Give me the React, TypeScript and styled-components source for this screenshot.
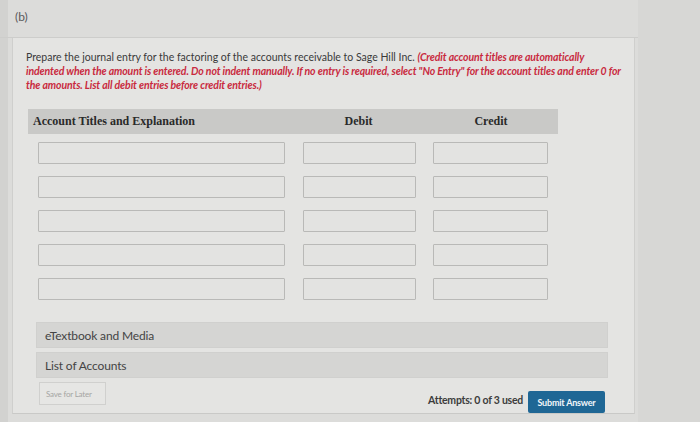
import React from "react";
import styled, { createGlobalStyle } from "styled-components";

const Global = createGlobalStyle`
  html, body { margin: 0; padding: 0; }
  body {
    background: #d6d6d4;
    font-family: Lato, "Open Sans", sans-serif;
    width: 700px;
    height: 422px;
    overflow: hidden;
  }
`;

const Page = styled.div`
  width: 700px;
  height: 422px;
  display: flex;
  flex-direction: column;
  background: linear-gradient(90deg, #d2d2d0 0px, #d2d2d0 8px, #dcdcda 8px, #dcdcda 638px, #d7d7d5 638px);
`;

const PartLabel = styled.div`
  height: 38px;
  box-sizing: border-box;
  padding: 9px 0 0 15px;
  font-size: 12px;
  color: #5a5a5a;
  border-bottom: 1px solid #cdcdcb;
  width: 638px;
`;

const Panel = styled.div`
  margin-left: 12px;
  width: 623px;
  height: 376px;
  box-sizing: border-box;
  background: #e4e4e2;
  border-left: 1px solid #cfcfcd;
  border-right: 1px solid #cfcfcd;
  border-bottom: 1px solid #c9c9c7;
  padding: 12px 0 0 13px;
  display: flex;
  flex-direction: column;
`;

const Instructions = styled.p`
  margin: 0;
  width: 605px;
  font-size: 10.5px;
  line-height: 14px;
  color: #3a3a3a;
  white-space: nowrap;
`;

const Red = styled.span`
  color: #c92a3e;
  font-style: italic;
  font-weight: 700;
  letter-spacing: -0.12px;
`;

const Table = styled.div`
  margin: 17px 0 0 2px;
  width: 530px;
  display: grid;
  grid-template-columns: 265px 131px 134px;
  row-gap: 12px;
`;

const HeadCell = styled.div<{ $center?: boolean }>`
  height: 25px;
  background: #c9c9c7;
  display: flex;
  align-items: center;
  justify-content: ${(p) => (p.$center ? "center" : "flex-start")};
  padding-left: ${(p) => (p.$center ? "0" : "5px")};
  font-family: "Liberation Serif", "DejaVu Serif", serif;
  font-weight: 700;
  font-size: 12px;
  color: #2a2a2a;
  margin-bottom: -4px;
`;

const Input = styled.div<{ $w: number; $ml: number }>`
  width: ${(p) => p.$w}px;
  margin-left: ${(p) => p.$ml}px;
  height: 22px;
  box-sizing: border-box;
  background: #e3e3e1;
  border: 1px solid #b9b9b7;
  border-radius: 1px;
`;

const Bars = styled.div`
  margin: 22px 0 0 10px;
  width: 572px;
  display: flex;
  flex-direction: column;
  gap: 4px;
`;

const Bar = styled.div`
  height: 26px;
  background: #d5d5d3;
  border: 1px solid #d0d0ce;
  box-sizing: border-box;
  display: flex;
  align-items: center;
  padding-left: 8px;
  font-size: 12px;
  color: #444;
  letter-spacing: -0.15px;
`;

const Footer = styled.div`
  margin: 4px 0 0 13px;
  width: 566px;
  display: flex;
  align-items: flex-start;
`;

const SaveBtn = styled.div`
  width: 67px;
  height: 23px;
  box-sizing: border-box;
  border: 1px solid #d0d0ce;
  background: #e6e6e4;
  font-size: 8px;
  color: #a5a5a3;
  display: flex;
  align-items: center;
  padding-left: 6px;
  letter-spacing: -0.2px;
`;

const Spacer = styled.div`
  flex: 1;
`;

const Attempts = styled.div`
  margin-top: 12px;
  font-size: 10.5px;
  font-weight: 700;
  color: #3c3c3c;
  letter-spacing: -0.25px;
  margin-right: 5px;
`;

const Submit = styled.div`
  margin-top: 9px;
  width: 77px;
  height: 22px;
  background: #1f6795;
  border-radius: 2px;
  color: #f2f6fa;
  font-size: 9px;
  font-weight: 700;
  display: flex;
  align-items: center;
  justify-content: center;
  letter-spacing: -0.2px;
`;

const rows = [0, 1, 2, 3, 4];

export default function App() {
  return (
    <>
      <Global />
      <Page>
        <PartLabel>(b)</PartLabel>
        <Panel>
          <Instructions>
            Prepare the journal entry for the factoring of the accounts receivable to Sage Hill Inc.{" "}
            <Red>
              (Credit account titles are automatically
              <br />
              indented when the amount is entered. Do not indent manually. If no entry is required, select "No
              Entry" for the account titles and enter 0 for
              <br />
              the amounts. List all debit entries before credit entries.)
            </Red>
          </Instructions>
          <Table>
            <HeadCell>Account Titles and Explanation</HeadCell>
            <HeadCell $center>Debit</HeadCell>
            <HeadCell $center>Credit</HeadCell>
            {rows.map((r) => (
              <React.Fragment key={r}>
                <Input $w={247} $ml={10} />
                <Input $w={113} $ml={10} />
                <Input $w={115} $ml={9} />
              </React.Fragment>
            ))}
          </Table>
          <Bars>
            <Bar>eTextbook and Media</Bar>
            <Bar>List of Accounts</Bar>
          </Bars>
          <Footer>
            <SaveBtn>Save for Later</SaveBtn>
            <Spacer />
            <Attempts>Attempts: 0 of 3 used</Attempts>
            <Submit>Submit Answer</Submit>
          </Footer>
        </Panel>
      </Page>
    </>
  );
}
